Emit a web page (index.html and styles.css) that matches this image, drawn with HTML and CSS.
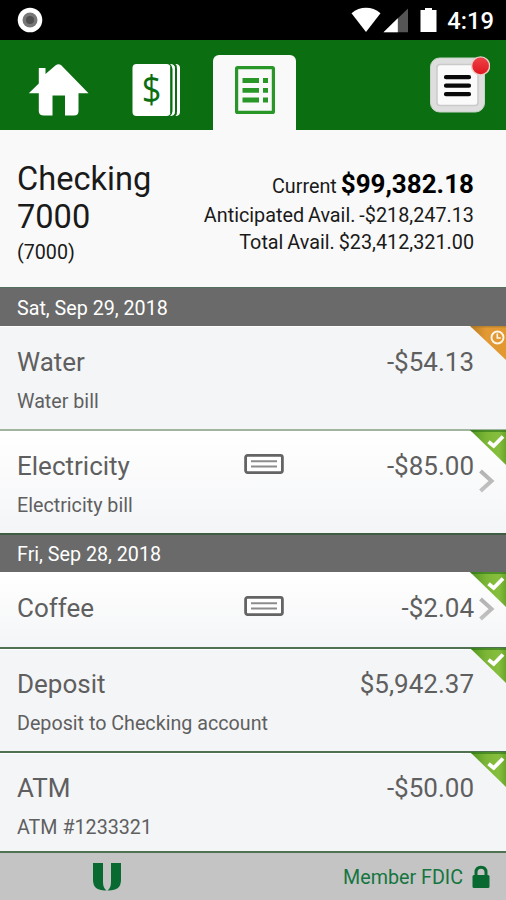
FILE: index.html
```html
<!DOCTYPE html>
<html lang="en">
<head>
<meta charset="utf-8">
<title>Checking 7000</title>
<link rel="stylesheet" href="styles.css">
</head>
<body>
<svg class="defs" width="0" height="0" aria-hidden="true">
  <defs>
    <linearGradient id="green" x1="0" y1="0" x2="1" y2="0"><stop offset="0" stop-color="#4f941f"/><stop offset=".45" stop-color="#7db636"/><stop offset=".8" stop-color="#86bf3e"/><stop offset="1" stop-color="#6aa52b"/></linearGradient>
    <linearGradient id="orange" x1="0" y1="0" x2="1" y2="0"><stop offset="0" stop-color="#b87a20"/><stop offset=".45" stop-color="#e39a35"/><stop offset="1" stop-color="#e2982f"/></linearGradient>
    <linearGradient id="chev" x1="0" y1="0" x2="0" y2="1"><stop offset="0" stop-color="#b2b2b2"/><stop offset="1" stop-color="#c2c2c2"/></linearGradient>
    <linearGradient id="red" x1="0" y1="0" x2="0" y2="1"><stop offset="0" stop-color="#ef4248"/><stop offset="1" stop-color="#e0161f"/></linearGradient>
    <symbol id="cleared" viewBox="0 0 36 36">
      <path d="M0 0H36V35Z" fill="url(#green)"/>
      <path d="M0 0H36V2H2Z" fill="#236b16" opacity=".55"/>
      <path d="M18.5 11.8L23.7 16L33 6.5" fill="none" stroke="#fff" stroke-width="3.8"/>
    </symbol>
    <symbol id="pending" viewBox="0 0 36 36">
      <path d="M0 0H36V34Z" fill="url(#orange)"/>
      <path d="M0 0H36V1.5H1.5Z" fill="#99722e" opacity=".5"/>
      <circle cx="27.5" cy="11.5" r="6" fill="none" stroke="#fff" stroke-opacity=".9" stroke-width="1.9"/>
      <path d="M27.3 7.5V12H30.8" fill="none" stroke="#fff" stroke-opacity=".9" stroke-width="1.6"/>
    </symbol>
    <symbol id="check" viewBox="0 0 40 20">
      <rect x="1.6" y="1.4" width="36.8" height="17.2" rx="2" fill="#fff" stroke="#646464" stroke-width="2.8"/>
      <path d="M7 7.3H33M7 12.5H33" stroke="#8c8c8c" stroke-width="2"/>
    </symbol>
    <symbol id="chevron" viewBox="0 0 16 24">
      <path d="M1.5 2L12.5 12L1.5 22" fill="none" stroke="url(#chev)" stroke-width="4"/>
    </symbol>
  </defs>
</svg>
<div class="app">
  <div class="status">
    <svg class="record" width="26" height="26" viewBox="0 0 26 26"><circle cx="13" cy="13" r="12.3" fill="#fff"/><circle cx="13" cy="13" r="7.5" fill="#777"/><circle cx="13" cy="13" r="4" fill="#505050"/></svg>
    <svg class="indicators" width="88" height="26" viewBox="0 0 88 26">
      <path d="M.5 6.2C9-1 21-1 29.5 6.2L15 25Z" fill="#fff"/>
      <path d="M32.5 25.2L57 1.5V25.2Z" fill="#555"/><path d="M32.5 25.2L46.8 11.2V25.2Z" fill="#fff"/>
      <path d="M69.5 3H74V1H81V3H85.5V25H69.5Z" fill="#fff"/>
    </svg>
    <span class="time">4:19</span>
  </div>
  <nav class="tabs">
    <a class="tab"><svg width="62" height="54" viewBox="0 0 62 54"><path d="M.8 30.3L10.8 20.5V5H17.5V11L28 2Q30.5.4 33 2L60.5 30.3H50.5V48Q50.5 52.5 46 52.5H37V32.5H24.5V52.5H16Q10.8 52.5 10.8 48V30.3Z" fill="#fff"/></svg></a>
    <a class="tab"><svg width="50" height="54" viewBox="0 0 50 54"><rect x=".5" y="1" width="38" height="52" rx="4" fill="#fff"/><path d="M38 1Q43 1 43 5V49Q43 53 38 53Q40.5 51 40.5 48V6Q40.5 3 38 1Z" fill="#fff"/><path d="M43.5 1Q48 1 48 5V49Q48 53 43.5 53Q45 51 45 48V6Q45 3 43.5 1Z" fill="#fff"/><path d="M38.8 4V50" stroke="#0b6e11" stroke-width="1"/><path d="M43.8 2V52" stroke="#0b6e11" stroke-width="1.2"/></svg><span class="dollar">$</span></a>
    <a class="tab active"><svg width="40" height="48" viewBox="0 0 40 48"><rect x="1.6" y="1.6" width="36.8" height="44.8" rx="1" fill="none" stroke="#289728" stroke-width="3.2"/><path d="M7.5 14.5H24M7.5 24.3H24M7.5 34H24M28 14.5H33M28 24.3H33M28 34H33" stroke="#289728" stroke-width="4.8"/></svg></a>
    <button class="menu" aria-label="Menu"><svg width="62" height="60" viewBox="0 0 62 60"><rect x="2.5" y="3" width="54" height="54" rx="9" fill="#dedede" stroke="#c7d5c7" stroke-width="1"/><rect x="9" y="9.5" width="41" height="41" rx="3" fill="#fafafa" stroke="#cacaca" stroke-width="1.5"/><path d="M18 22.2H41M18 30.7H41M18 39.2H41" stroke="#080808" stroke-width="4.2" stroke-linecap="round"/><circle cx="52.6" cy="10.9" r="9" fill="url(#red)" stroke="#e9cfc9" stroke-width="1.4"/></svg></button>
  </nav>
  <header class="account">
    <div><h1>Checking<br>7000</h1><p class="number">(7000)</p></div>
    <div class="balances"><p class="current">Current <b>$99,382.18</b></p><p>Anticipated Avail. <span>-$218,247.13</span></p><p>Total Avail. <span>$23,412,321.00</span></p></div>
  </header>
  <h2 class="date first">Sat, Sep 29, 2018</h2>
  <article class="row pale">
    <div class="line"><span>Water</span><span class="amount">-$54.13</span></div>
    <p class="note">Water bill</p>
    <svg class="corner"><use href="#pending"/></svg>
  </article>
  <article class="row shaded dark">
    <div class="line"><span>Electricity</span><svg class="check"><use href="#check"/></svg><span class="amount">-$85.00</span></div>
    <p class="note">Electricity bill</p>
    <svg class="corner"><use href="#cleared"/></svg><svg class="chevron"><use href="#chevron"/></svg>
  </article>
  <h2 class="date">Fri, Sep 28, 2018</h2>
  <article class="row shaded short">
    <div class="line"><span>Coffee</span><svg class="check"><use href="#check"/></svg><span class="amount">-$2.04</span></div>
    <svg class="corner"><use href="#cleared"/></svg><svg class="chevron"><use href="#chevron"/></svg>
  </article>
  <article class="row">
    <div class="line"><span>Deposit</span><span class="amount">$5,942.37</span></div>
    <p class="note">Deposit to Checking account</p>
    <svg class="corner"><use href="#cleared"/></svg>
  </article>
  <article class="row last">
    <div class="line"><span>ATM</span><span class="amount">-$50.00</span></div>
    <p class="note">ATM #1233321</p>
    <svg class="corner"><use href="#cleared"/></svg>
  </article>
  <footer class="footer">
    <svg width="30" height="30" viewBox="0 0 30 30"><path d="M1 1H11V20Q11 26 14.5 28.5Q1 29 1 18Z" fill="#096a31"/><path d="M19 1H29V18Q29 29 15.5 28.5Q19 26 19 20Z" fill="#096a31"/></svg>
    <span class="member">Member FDIC</span>
    <svg width="18" height="24" viewBox="0 0 18 24"><path d="M4 11V7.5Q4 2.3 9 2.3T14 7.5V11" fill="none" stroke="#096a31" stroke-width="3"/><rect x=".5" y="10" width="17" height="13" rx="1.5" fill="#096a31"/></svg>
  </footer>
</div>
</body>
</html>
```
FILE: styles.css
```css
* { box-sizing: border-box; }
body, h1, h2, p { margin: 0; font-weight: 400; }
body { font-family: Roboto, "Liberation Sans", sans-serif; background: #c4c4c4; }
svg { display: block; flex: none; }
.defs { position: absolute; }
.app { width: 506px; height: 900px; overflow: hidden; display: flex; flex-direction: column; background: #f9f9f9; }
.app > * { flex: none; }

.status { height: 40px; background: #000; color: #fff; display: flex; align-items: center; padding: 0 12px 0 17px; }
.indicators { margin-left: auto; margin-right: 8px; }
.time { font-size: 23.7px; font-weight: 500; line-height: 28px; padding-top: 2px; }

.tabs { height: 90px; background: #0b6e11; display: flex; align-items: flex-start; }
.tab { position: relative; padding: 23px 0 0; }
.tab:first-child { margin-left: 28px; }
.tab:nth-child(2) { margin-left: 42px; }
.dollar { position: absolute; left: 0; top: 21px; width: 39px; text-align: center; color: #0b6e11; font: 39px/54px "Open Sans", sans-serif; transform: scaleX(.88); }
.tab.active { width: 83px; height: 75px; margin: 15px 0 0 31px; padding: 11px 22px 0; background: #f9f9f9; border-radius: 6px 6px 0 0; }
.menu { margin: 15px 16px 0 auto; padding: 0; border: 0; background: none; }

.account { height: 157px; padding: 30px 32px 0 17px; display: flex; justify-content: space-between; background: #f9f9f9; color: #1a1a1a; }
h1 { font-size: 32.6px; line-height: 38px; }
.number { font-size: 19.7px; line-height: 33px; }
.balances { text-align: right; line-height: 27px; padding-top: 9px; word-spacing: -1px; }
.balances p { font-size: 19.8px; }
.balances .current { line-height: 31px; }
.current b { font-size: 26px; font-weight: 700; color: #000; }

.date { height: 37px; padding-left: 17px; background: #6a6a6a; color: #fff; font-size: 19.7px; line-height: 39px; }
.date.first { height: 39px; line-height: 42px; border-top: 1px solid #56705f; }

.row { position: relative; height: 104px; padding: 19px 32px 0 17px; background: #f4f5f7; border-top: 1px solid #fff; border-bottom: 2px solid #4f7352; color: #5f5f5f; }
.row.pale { height: 105px; padding-top: 20px; border-bottom-color: #a1b5a0; }
.row.shaded { background: linear-gradient(#fff, #f4f5f7); }
.row.dark { height: 104px; border-bottom-color: #3f5c45; }
.row.short { height: 77px; padding-top: 20px; }
.row.last { height: 100px; }
.line { display: grid; grid-template-columns: 227px 40px 1fr; font-size: 26px; line-height: 30px; }
.amount { grid-column: 3; text-align: right; }
.check { width: 40px; height: 20px; margin-top: 3px; }
.note { margin-top: 13px; font-size: 19.7px; line-height: 24px; }
.corner { position: absolute; top: -2px; right: 0; width: 36px; height: 36px; }
.pale .corner, .short .corner { top: -1px; }
.chevron { position: absolute; top: 37px; right: 11px; width: 16px; height: 24px; }
.short .chevron { top: 24px; }

.footer { height: 47px; padding: 0 16px 0 92px; background: #c4c4c4; display: flex; align-items: center; color: #147540; }
.member { margin-left: auto; margin-right: 9px; padding-top: 2px; font-size: 19.7px; line-height: 24px; }
```
